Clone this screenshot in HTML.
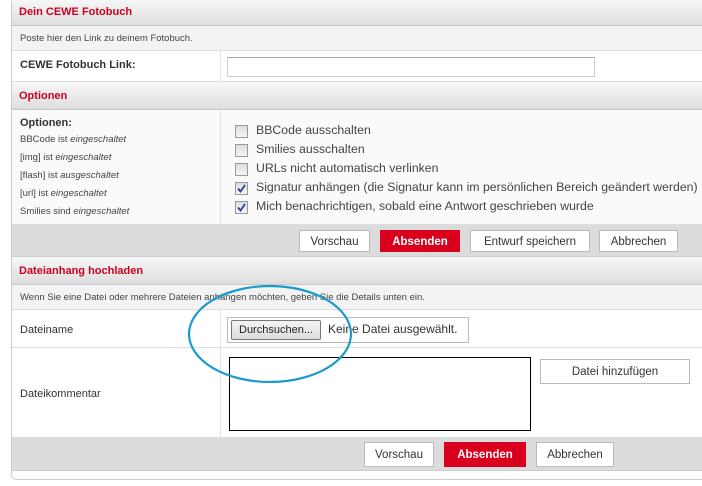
<!DOCTYPE html>
<html><head><meta charset="utf-8"><style>
body{margin:0;width:702px;height:486px;background:#fff;position:relative;overflow:hidden;font-family:"Liberation Sans",sans-serif;}
.a{position:absolute;}
.wrap{left:11px;top:-2px;width:720px;height:480px;border:1px solid #ccc;border-radius:5px;background:#fff;}
.hd{left:12px;width:700px;background:linear-gradient(#f7f7f7,#dedede);border-bottom:1px solid #c8c8c8;color:#cc0022;font-weight:bold;font-size:11px;}
.ds{left:12px;width:700px;background:#f3f3f3;border-bottom:1px solid #ddd;color:#444;font-size:9.5px;}
.row{left:12px;width:700px;background:#fff;border-bottom:1px solid #ddd;}
.vl{left:220px;width:1px;background:#e2e2e2;}
.lb{color:#333;font-size:11px;}
.bar{left:12px;width:700px;background:#dcdcdc;border-bottom:1px solid #ccc;}
.btn{height:22px;border:1px solid #bbb;background:#fff;color:#333;font-size:11.5px;text-align:center;line-height:22px;box-sizing:border-box;}
.red{background:#d8001c;border-color:#d8001c;color:#fff;font-weight:bold;}
.cb{width:11px;height:11px;border:1px solid #999;background:linear-gradient(#ddd,#f6f6f6);}
.ck{font-size:12.3px;color:#444;}
.op{font-size:9.5px;color:#444;}
</style></head><body>
<div class="a wrap"></div>
<div class="a hd" style="top:0;height:25px;"><span class="a" style="left:7px;top:6px">Dein CEWE Fotobuch</span></div>
<div class="a ds" style="top:26px;height:24px;"><span class="a" style="left:8px;top:7px">Poste hier den Link zu deinem Fotobuch.</span></div>
<div class="a row" style="top:51px;height:30px;"></div>
<div class="a vl" style="top:51px;height:30px;"></div>
<div class="a lb" style="left:20px;top:59px;font-weight:bold;">CEWE Fotobuch Link:</div>
<div class="a" style="left:227px;top:57px;width:366px;height:18px;border:1px solid #ccc;border-top-color:#aaa;background:#fff;"></div>
<div class="a hd" style="top:82px;height:27px;"><span class="a" style="left:7px;top:8px">Optionen</span></div>
<div class="a row" style="top:110px;height:114px;background:#fafafa;"></div>
<div class="a vl" style="top:110px;height:114px;"></div>
<div class="a lb" style="left:20px;top:117px;font-weight:bold;">Optionen:</div>
<div class="a op" style="left:20px;top:134px">BBCode ist <i>eingeschaltet</i></div>
<div class="a op" style="left:20px;top:152px">[img] ist <i>eingeschaltet</i></div>
<div class="a op" style="left:20px;top:170px">[flash] ist <i>ausgeschaltet</i></div>
<div class="a op" style="left:20px;top:188px">[url] ist <i>eingeschaltet</i></div>
<div class="a op" style="left:20px;top:206px">Smilies sind <i>eingeschaltet</i></div>
<div class="a cb" style="left:235px;top:125px"></div><div class="a ck" style="left:256px;top:123px">BBCode ausschalten</div>
<div class="a cb" style="left:235px;top:144px"></div><div class="a ck" style="left:256px;top:142px">Smilies ausschalten</div>
<div class="a cb" style="left:235px;top:163px"></div><div class="a ck" style="left:256px;top:161px">URLs nicht automatisch verlinken</div>
<div class="a cb" style="left:235px;top:182px"><svg width="11" height="11" style="position:absolute;left:0;top:0"><path d="M2 5.5L4.5 8.5L9 2" stroke="#2a3f9a" stroke-width="1.8" fill="none"/></svg></div><div class="a ck" style="left:256px;top:180px;white-space:nowrap">Signatur anhängen (die Signatur kann im persönlichen Bereich geändert werden)</div>
<div class="a cb" style="left:235px;top:201px"><svg width="11" height="11" style="position:absolute;left:0;top:0"><path d="M2 5.5L4.5 8.5L9 2" stroke="#2a3f9a" stroke-width="1.8" fill="none"/></svg></div><div class="a ck" style="left:256px;top:199px">Mich benachrichtigen, sobald eine Antwort geschrieben wurde</div>
<div class="a bar" style="top:225px;height:31px;"></div>
<div class="a btn" style="left:299px;top:230px;width:71px;">Vorschau</div>
<div class="a btn red" style="left:380px;top:230px;width:80px;">Absenden</div>
<div class="a btn" style="left:470px;top:230px;width:120px;">Entwurf speichern</div>
<div class="a btn" style="left:599px;top:230px;width:79px;">Abbrechen</div>
<div class="a hd" style="top:257px;height:27px;"><span class="a" style="left:7px;top:8px">Dateianhang hochladen</span></div>
<div class="a ds" style="top:285px;height:24px;"><span class="a" style="left:8px;top:7px">Wenn Sie eine Datei oder mehrere Dateien anhängen möchten, geben Sie die Details unten ein.</span></div>
<div class="a row" style="top:310px;height:37px;"></div>
<div class="a vl" style="top:310px;height:127px;"></div>
<div class="a lb" style="left:20px;top:324px;">Dateiname</div>
<div class="a" style="left:227px;top:317px;width:240px;height:24px;border:1px solid #bbb;background:#fff;"></div>
<div class="a" style="left:231px;top:320px;width:88px;height:18px;border:1px solid #777;border-radius:2px;background:linear-gradient(#f4f4f4,#dcdcdc);font-size:11px;text-align:center;line-height:18px;color:#222;">Durchsuchen...</div>
<div class="a" style="left:328px;top:322px;font-size:12px;color:#333;">Keine Datei ausgewählt.</div>
<div class="a row" style="top:348px;height:89px;"></div>
<div class="a vl" style="top:348px;height:89px;"></div>
<div class="a lb" style="left:20px;top:388px;">Dateikommentar</div>
<div class="a" style="left:229px;top:357px;width:300px;height:72px;border:1px solid #000;background:#fff;"></div>
<div class="a btn" style="left:540px;top:359px;width:150px;height:25px;line-height:25px;">Datei hinzufügen</div>
<div class="a bar" style="top:438px;height:32px;"></div>
<div class="a btn" style="left:364px;top:442px;width:70px;height:25px;line-height:25px;">Vorschau</div>
<div class="a btn red" style="left:444px;top:442px;width:82px;height:25px;line-height:25px;">Absenden</div>
<div class="a btn" style="left:536px;top:442px;width:78px;height:25px;line-height:25px;">Abbrechen</div>
<svg class="a" style="left:0;top:0" width="702" height="486"><ellipse cx="270" cy="334" rx="81" ry="48" fill="none" stroke="#1b9bcb" stroke-width="2.2"/></svg>
</body></html>
